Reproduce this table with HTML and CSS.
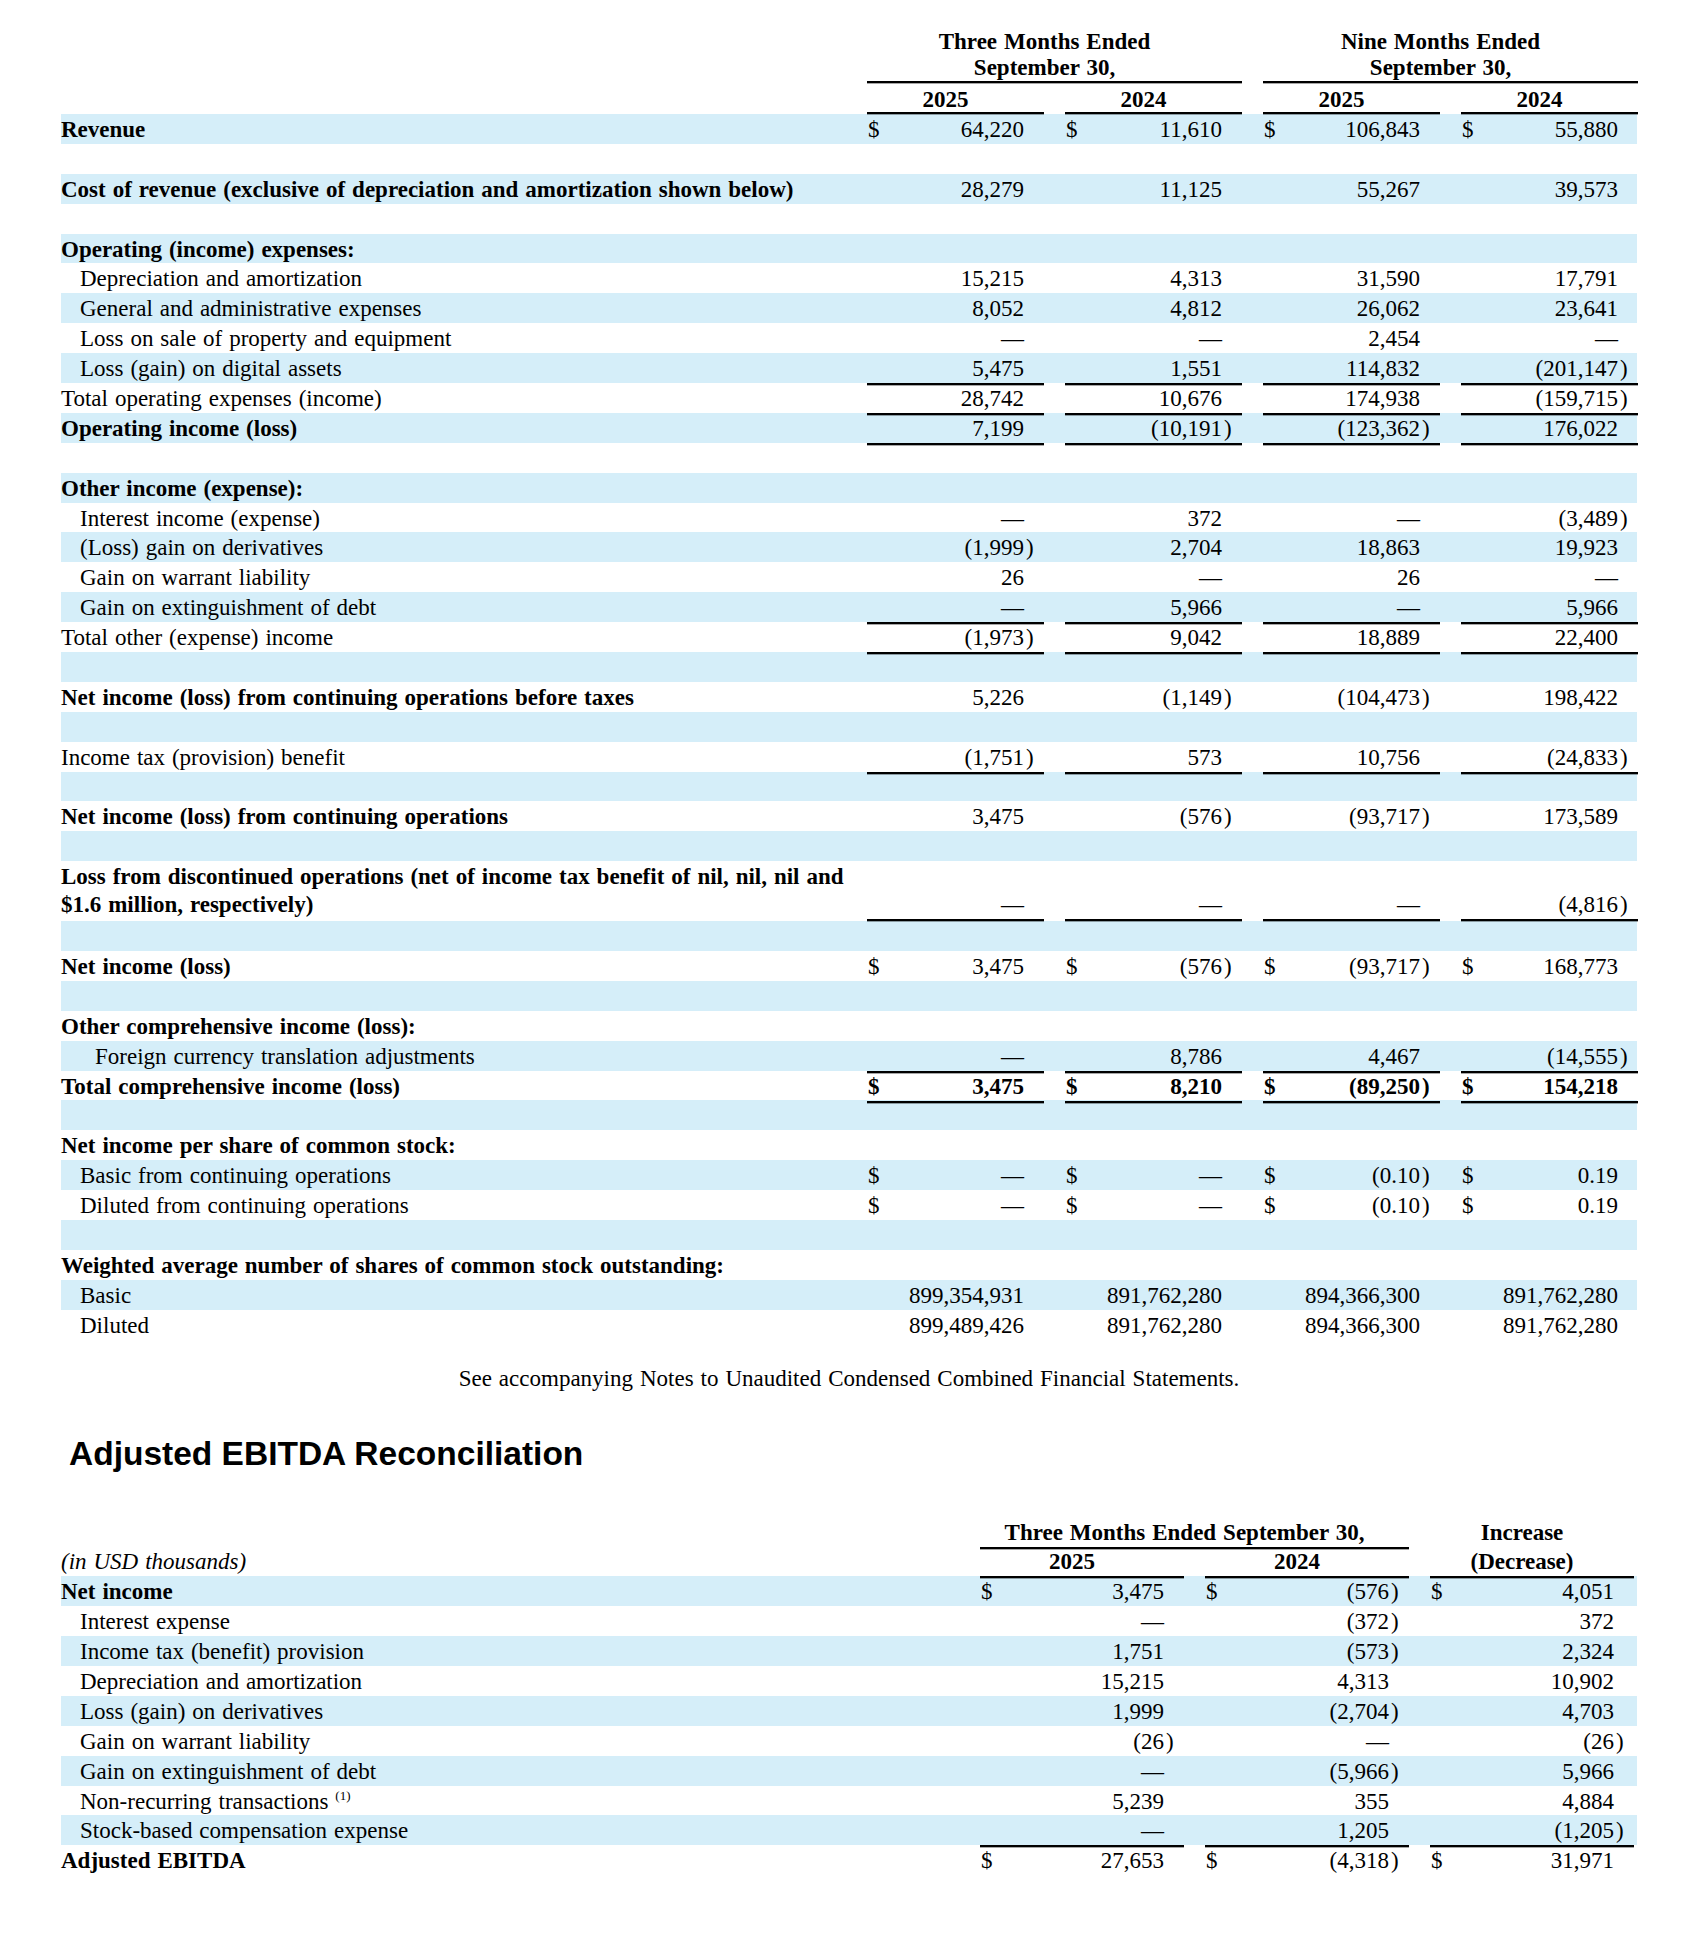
FILE: index.html
```html
<!DOCTYPE html>
<html lang="en">
<head>
<meta charset="utf-8">
<title>Statements of Operations and Adjusted EBITDA Reconciliation</title>
<link rel="stylesheet" href="styles.css">
</head>
<body>
<div class="page">
  <div class="stmt">
    <div class="row hA">
      <div></div>
      <div class="hspan">Three Months Ended<br>September 30,</div>
      <div class="hspan">Nine Months Ended<br>September 30,</div>
    </div>
    <div class="row hB">
      <div></div>
      <div class="hyear">2025</div>
      <div class="hyear">2024</div>
      <div class="hyear">2025</div>
      <div class="hyear">2024</div>
    </div>

    <div class="row bl">
      <div class="lbl b">Revenue</div>
      <div class="amt"><span class="cur">$</span><span class="num">64,220</span></div>
      <div class="amt"><span class="cur">$</span><span class="num">11,610</span></div>
      <div class="amt"><span class="cur">$</span><span class="num">106,843</span></div>
      <div class="amt"><span class="cur">$</span><span class="num">55,880</span></div>
    </div>
    <div class="row"></div>
    <div class="row bl">
      <div class="lbl b">Cost of revenue (exclusive of depreciation and amortization shown below)</div>
      <div class="amt"><span class="num">28,279</span></div>
      <div class="amt"><span class="num">11,125</span></div>
      <div class="amt"><span class="num">55,267</span></div>
      <div class="amt"><span class="num">39,573</span></div>
    </div>
    <div class="row"></div>
    <div class="row bl">
      <div class="lbl b">Operating (income) expenses:</div>
    </div>
    <div class="row">
      <div class="lbl in1">Depreciation and amortization</div>
      <div class="amt"><span class="num">15,215</span></div>
      <div class="amt"><span class="num">4,313</span></div>
      <div class="amt"><span class="num">31,590</span></div>
      <div class="amt"><span class="num">17,791</span></div>
    </div>
    <div class="row bl">
      <div class="lbl in1">General and administrative expenses</div>
      <div class="amt"><span class="num">8,052</span></div>
      <div class="amt"><span class="num">4,812</span></div>
      <div class="amt"><span class="num">26,062</span></div>
      <div class="amt"><span class="num">23,641</span></div>
    </div>
    <div class="row">
      <div class="lbl in1">Loss on sale of property and equipment</div>
      <div class="amt"><span class="num">—</span></div>
      <div class="amt"><span class="num">—</span></div>
      <div class="amt"><span class="num">2,454</span></div>
      <div class="amt"><span class="num">—</span></div>
    </div>
    <div class="row bl">
      <div class="lbl in1">Loss (gain) on digital assets</div>
      <div class="amt ul"><span class="num">5,475</span></div>
      <div class="amt ul"><span class="num">1,551</span></div>
      <div class="amt ul"><span class="num">114,832</span></div>
      <div class="amt ul"><span class="num">(201,147</span><span class="sfx">)</span></div>
    </div>
    <div class="row">
      <div class="lbl">Total operating expenses (income)</div>
      <div class="amt ul"><span class="num">28,742</span></div>
      <div class="amt ul"><span class="num">10,676</span></div>
      <div class="amt ul"><span class="num">174,938</span></div>
      <div class="amt ul"><span class="num">(159,715</span><span class="sfx">)</span></div>
    </div>
    <div class="row bl">
      <div class="lbl b">Operating income (loss)</div>
      <div class="amt ul"><span class="num">7,199</span></div>
      <div class="amt ul"><span class="num">(10,191</span><span class="sfx">)</span></div>
      <div class="amt ul"><span class="num">(123,362</span><span class="sfx">)</span></div>
      <div class="amt ul"><span class="num">176,022</span></div>
    </div>
    <div class="row"></div>
    <div class="row bl">
      <div class="lbl b">Other income (expense):</div>
    </div>
    <div class="row">
      <div class="lbl in1">Interest income (expense)</div>
      <div class="amt"><span class="num">—</span></div>
      <div class="amt"><span class="num">372</span></div>
      <div class="amt"><span class="num">—</span></div>
      <div class="amt"><span class="num">(3,489</span><span class="sfx">)</span></div>
    </div>
    <div class="row bl">
      <div class="lbl in1">(Loss) gain on derivatives</div>
      <div class="amt"><span class="num">(1,999</span><span class="sfx">)</span></div>
      <div class="amt"><span class="num">2,704</span></div>
      <div class="amt"><span class="num">18,863</span></div>
      <div class="amt"><span class="num">19,923</span></div>
    </div>
    <div class="row">
      <div class="lbl in1">Gain on warrant liability</div>
      <div class="amt"><span class="num">26</span></div>
      <div class="amt"><span class="num">—</span></div>
      <div class="amt"><span class="num">26</span></div>
      <div class="amt"><span class="num">—</span></div>
    </div>
    <div class="row bl">
      <div class="lbl in1">Gain on extinguishment of debt</div>
      <div class="amt ul"><span class="num">—</span></div>
      <div class="amt ul"><span class="num">5,966</span></div>
      <div class="amt ul"><span class="num">—</span></div>
      <div class="amt ul"><span class="num">5,966</span></div>
    </div>
    <div class="row">
      <div class="lbl">Total other (expense) income</div>
      <div class="amt ul"><span class="num">(1,973</span><span class="sfx">)</span></div>
      <div class="amt ul"><span class="num">9,042</span></div>
      <div class="amt ul"><span class="num">18,889</span></div>
      <div class="amt ul"><span class="num">22,400</span></div>
    </div>
    <div class="row bl"></div>
    <div class="row">
      <div class="lbl b">Net income (loss) from continuing operations before taxes</div>
      <div class="amt"><span class="num">5,226</span></div>
      <div class="amt"><span class="num">(1,149</span><span class="sfx">)</span></div>
      <div class="amt"><span class="num">(104,473</span><span class="sfx">)</span></div>
      <div class="amt"><span class="num">198,422</span></div>
    </div>
    <div class="row bl"></div>
    <div class="row">
      <div class="lbl">Income tax (provision) benefit</div>
      <div class="amt ul"><span class="num">(1,751</span><span class="sfx">)</span></div>
      <div class="amt ul"><span class="num">573</span></div>
      <div class="amt ul"><span class="num">10,756</span></div>
      <div class="amt ul"><span class="num">(24,833</span><span class="sfx">)</span></div>
    </div>
    <div class="row bl"></div>
    <div class="row">
      <div class="lbl b">Net income (loss) from continuing operations</div>
      <div class="amt"><span class="num">3,475</span></div>
      <div class="amt"><span class="num">(576</span><span class="sfx">)</span></div>
      <div class="amt"><span class="num">(93,717</span><span class="sfx">)</span></div>
      <div class="amt"><span class="num">173,589</span></div>
    </div>
    <div class="row bl"></div>
    <div class="row tall">
      <div class="lbl b wrap">Loss from discontinued operations (net of income tax benefit of nil, nil, nil and $1.6 million, respectively)</div>
      <div class="amt ul"><span class="num">—</span></div>
      <div class="amt ul"><span class="num">—</span></div>
      <div class="amt ul"><span class="num">—</span></div>
      <div class="amt ul"><span class="num">(4,816</span><span class="sfx">)</span></div>
    </div>
    <div class="row bl"></div>
    <div class="row">
      <div class="lbl b">Net income (loss)</div>
      <div class="amt"><span class="cur">$</span><span class="num">3,475</span></div>
      <div class="amt"><span class="cur">$</span><span class="num">(576</span><span class="sfx">)</span></div>
      <div class="amt"><span class="cur">$</span><span class="num">(93,717</span><span class="sfx">)</span></div>
      <div class="amt"><span class="cur">$</span><span class="num">168,773</span></div>
    </div>
    <div class="row bl"></div>
    <div class="row">
      <div class="lbl b">Other comprehensive income (loss):</div>
    </div>
    <div class="row bl">
      <div class="lbl in2">Foreign currency translation adjustments</div>
      <div class="amt ul"><span class="num">—</span></div>
      <div class="amt ul"><span class="num">8,786</span></div>
      <div class="amt ul"><span class="num">4,467</span></div>
      <div class="amt ul"><span class="num">(14,555</span><span class="sfx">)</span></div>
    </div>
    <div class="row">
      <div class="lbl b">Total comprehensive income (loss)</div>
      <div class="amt ul b"><span class="cur">$</span><span class="num">3,475</span></div>
      <div class="amt ul b"><span class="cur">$</span><span class="num">8,210</span></div>
      <div class="amt ul b"><span class="cur">$</span><span class="num">(89,250</span><span class="sfx">)</span></div>
      <div class="amt ul b"><span class="cur">$</span><span class="num">154,218</span></div>
    </div>
    <div class="row bl"></div>
    <div class="row">
      <div class="lbl b">Net income per share of common stock:</div>
    </div>
    <div class="row bl">
      <div class="lbl in1">Basic from continuing operations</div>
      <div class="amt"><span class="cur">$</span><span class="num">—</span></div>
      <div class="amt"><span class="cur">$</span><span class="num">—</span></div>
      <div class="amt"><span class="cur">$</span><span class="num">(0.10</span><span class="sfx">)</span></div>
      <div class="amt"><span class="cur">$</span><span class="num">0.19</span></div>
    </div>
    <div class="row">
      <div class="lbl in1">Diluted from continuing operations</div>
      <div class="amt"><span class="cur">$</span><span class="num">—</span></div>
      <div class="amt"><span class="cur">$</span><span class="num">—</span></div>
      <div class="amt"><span class="cur">$</span><span class="num">(0.10</span><span class="sfx">)</span></div>
      <div class="amt"><span class="cur">$</span><span class="num">0.19</span></div>
    </div>
    <div class="row bl"></div>
    <div class="row">
      <div class="lbl b">Weighted average number of shares of common stock outstanding:</div>
    </div>
    <div class="row bl">
      <div class="lbl in1">Basic</div>
      <div class="amt"><span class="num">899,354,931</span></div>
      <div class="amt"><span class="num">891,762,280</span></div>
      <div class="amt"><span class="num">894,366,300</span></div>
      <div class="amt"><span class="num">891,762,280</span></div>
    </div>
    <div class="row">
      <div class="lbl in1">Diluted</div>
      <div class="amt"><span class="num">899,489,426</span></div>
      <div class="amt"><span class="num">891,762,280</span></div>
      <div class="amt"><span class="num">894,366,300</span></div>
      <div class="amt"><span class="num">891,762,280</span></div>
    </div>
  </div>

  <p class="note">See accompanying Notes to Unaudited Condensed Combined Financial Statements.</p>

  <h2 class="section-title">Adjusted EBITDA Reconciliation</h2>

  <div class="recon">
    <div class="row">
      <div></div>
      <div class="hspan2">Three Months Ended September 30,</div>
      <div class="hcol">Increase</div>
    </div>
    <div class="row">
      <div class="lbl it">(in USD thousands)</div>
      <div class="hcol ul">2025</div>
      <div class="hcol ul">2024</div>
      <div class="hcol ul">(Decrease)</div>
    </div>
    <div class="row bl">
      <div class="lbl b">Net income</div>
      <div class="amt"><span class="cur">$</span><span class="num">3,475</span></div>
      <div class="amt"><span class="cur">$</span><span class="num">(576</span><span class="sfx">)</span></div>
      <div class="amt"><span class="cur">$</span><span class="num">4,051</span></div>
    </div>
    <div class="row">
      <div class="lbl in1">Interest expense</div>
      <div class="amt"><span class="num">—</span></div>
      <div class="amt"><span class="num">(372</span><span class="sfx">)</span></div>
      <div class="amt"><span class="num">372</span></div>
    </div>
    <div class="row bl">
      <div class="lbl in1">Income tax (benefit) provision</div>
      <div class="amt"><span class="num">1,751</span></div>
      <div class="amt"><span class="num">(573</span><span class="sfx">)</span></div>
      <div class="amt"><span class="num">2,324</span></div>
    </div>
    <div class="row">
      <div class="lbl in1">Depreciation and amortization</div>
      <div class="amt"><span class="num">15,215</span></div>
      <div class="amt"><span class="num">4,313</span></div>
      <div class="amt"><span class="num">10,902</span></div>
    </div>
    <div class="row bl">
      <div class="lbl in1">Loss (gain) on derivatives</div>
      <div class="amt"><span class="num">1,999</span></div>
      <div class="amt"><span class="num">(2,704</span><span class="sfx">)</span></div>
      <div class="amt"><span class="num">4,703</span></div>
    </div>
    <div class="row">
      <div class="lbl in1">Gain on warrant liability</div>
      <div class="amt"><span class="num">(26</span><span class="sfx">)</span></div>
      <div class="amt"><span class="num">—</span></div>
      <div class="amt"><span class="num">(26</span><span class="sfx">)</span></div>
    </div>
    <div class="row bl">
      <div class="lbl in1">Gain on extinguishment of debt</div>
      <div class="amt"><span class="num">—</span></div>
      <div class="amt"><span class="num">(5,966</span><span class="sfx">)</span></div>
      <div class="amt"><span class="num">5,966</span></div>
    </div>
    <div class="row">
      <div class="lbl in1">Non-recurring transactions <sup class="fn">(1)</sup></div>
      <div class="amt"><span class="num">5,239</span></div>
      <div class="amt"><span class="num">355</span></div>
      <div class="amt"><span class="num">4,884</span></div>
    </div>
    <div class="row bl">
      <div class="lbl in1">Stock-based compensation expense</div>
      <div class="amt ul"><span class="num">—</span></div>
      <div class="amt ul"><span class="num">1,205</span></div>
      <div class="amt ul"><span class="num">(1,205</span><span class="sfx">)</span></div>
    </div>
    <div class="row">
      <div class="lbl b">Adjusted EBITDA</div>
      <div class="amt ul"><span class="cur">$</span><span class="num">27,653</span></div>
      <div class="amt ul"><span class="cur">$</span><span class="num">(4,318</span><span class="sfx">)</span></div>
      <div class="amt ul"><span class="cur">$</span><span class="num">31,971</span></div>
    </div>
  </div>
</div>
</body>
</html>
```

FILE: styles.css
```css
* {
  box-sizing: border-box;
  margin: 0;
  padding: 0;
}

body {
  margin: 0;
  background: #ffffff;
  color: #000000;
  font-family: "Liberation Serif", "Times New Roman", serif;
  font-size: 23px;
  word-spacing: 1.2px;
}

.page {
  width: 1698px;
  padding: 29px 61px 0 61px;
}

.stmt,
.recon {
  width: 1576px;
}

.row {
  display: grid;
  grid-template-columns: 785px repeat(4, 177px);
  column-gap: 21px;
  height: 29.9px;
}

.recon .row {
  grid-template-columns: 898px repeat(3, 204px);
}

.row.bl {
  background: #d5eef9;
}

.lbl,
.amt,
.hcol {
  height: 100%;
  padding-top: 2px;
  line-height: 28px;
  white-space: nowrap;
}

.b {
  font-weight: bold;
}

.it {
  font-style: italic;
}

.in1 {
  padding-left: 19px;
}

.in2 {
  padding-left: 34px;
}

.amt {
  display: grid;
  grid-template-columns: 20px 1fr 20px;
}

.cur {
  grid-column: 1;
  padding-left: 1px;
}

.num {
  grid-column: 2;
  text-align: right;
}

.sfx {
  grid-column: 3;
  padding-left: 2px;
}

.ul,
.hspan,
.hyear,
.hspan2 {
  border-bottom: 2px solid #000000;
  box-shadow: 0 1px 0 rgba(0, 0, 0, 0.35);
}

/* Tall (wrapped) row */
.row.tall {
  height: 59.8px;
}

.row.tall .lbl {
  white-space: normal;
}

.row.tall .amt {
  padding-top: 30px;
}

/* Statement header */
.row.hA {
  height: 53px;
}

.hspan {
  grid-column: span 2;
  text-align: center;
  font-weight: bold;
  line-height: 26px;
  padding-right: 20px;
}

.row.hB {
  height: 32px;
}

.hyear {
  text-align: center;
  font-weight: bold;
  padding-top: 6px;
  line-height: 24px;
  padding-right: 20px;
}

.note {
  margin-top: 27px;
  line-height: 23px;
  text-align: center;
}

.section-title {
  margin-top: 45px;
  padding-left: 8px;
  font-family: "Liberation Sans", Arial, Helvetica, sans-serif;
  font-weight: 700;
  font-size: 33.5px;
  line-height: 38px;
  word-spacing: 0;
}

.recon {
  margin-top: 44px;
}

.hspan2 {
  grid-column: span 2;
  text-align: center;
  font-weight: bold;
  padding-top: 2px;
  line-height: 28px;
  padding-right: 20px;
  white-space: nowrap;
}

.hcol {
  text-align: center;
  font-weight: bold;
  padding-right: 20px;
}

.fn {
  font-size: 13px;
  line-height: 0;
  vertical-align: 9px;
}
```
